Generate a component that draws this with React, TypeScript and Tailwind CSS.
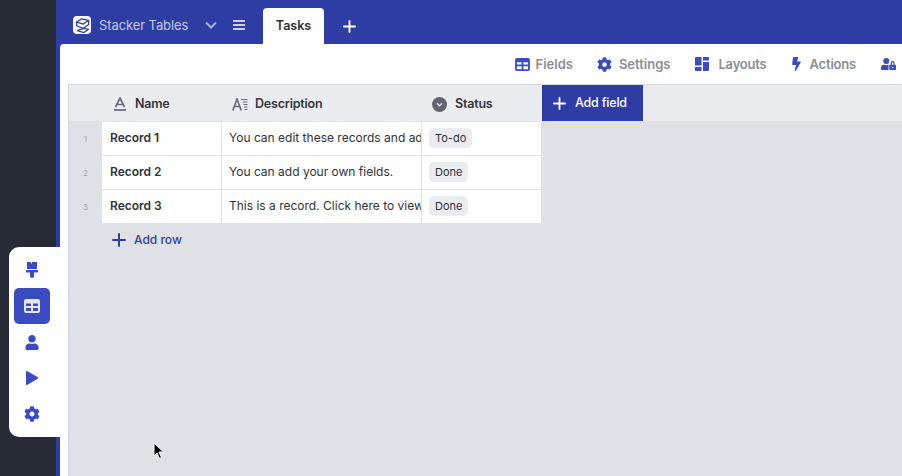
import React from 'react';
import { FaBolt, FaCog, FaUser, FaUserLock } from 'react-icons/fa';

const font = 'font-["Inter","Liberation_Sans",sans-serif]';

const TableIcon = ({ className }: { className?: string }) => (
  <svg viewBox="0 0 16 14" className={className} fill="currentColor">
    <path d="M2 0h12a2 2 0 0 1 2 2v10a2 2 0 0 1-2 2H2a2 2 0 0 1-2-2V2a2 2 0 0 1 2-2Zm0 4.500V7h5V4.500H2Zm7 0V7h5V4.500H9ZM2 9v3h5V9H2Zm7 0v3h5V9H9Z" fillRule="evenodd" />
  </svg>
);

const LayoutIcon = ({ className }: { className?: string }) => (
  <svg viewBox="0 0 14 14" className={className} fill="currentColor">
    <path d="M0 1a1 1 0 0 1 1-1h5.500v8.500H0V1ZM8 0h5a1 1 0 0 1 1 1v2.500H8V0ZM8 5h6v8a1 1 0 0 1-1 1H8V5ZM0 10h6.500v4H1a1 1 0 0 1-1-1v-3Z" />
  </svg>
);

const BrushIcon = ({ className }: { className?: string }) => (
  <svg viewBox="0 0 12 16" className={className} fill="currentColor">
    <path d="M1 0h4v1.500h1V0h5v7H1V0ZM0 8h12v1.500a1 1 0 0 1-1 1H8V14a2 2 0 0 1-4 0v-3.500H1a1 1 0 0 1-1-1V8Z" />
  </svg>
);

const PlayIcon = ({ className }: { className?: string }) => (
  <svg viewBox="0 0 12 14" className={className} fill="currentColor">
    <path d="M0 1a1 1 0 0 1 1.500-.800l10 5.900a1 1 0 0 1 0 1.700l-10 5.900A1 1 0 0 1 0 13V1Z" />
  </svg>
);

const PlusIcon = ({ className }: { className?: string }) => (
  <svg viewBox="0 0 14 14" className={className} fill="none" stroke="currentColor" strokeWidth="2" strokeLinecap="round">
    <path d="M7 1v12M1 7h12" />
  </svg>
);

const NameIcon = () => (
  <svg viewBox="0 0 14 14" className="h-[14px] w-[14px] text-[#6b6f7d]" fill="none" stroke="currentColor" strokeWidth="1.700">
    <path d="M2.500 10 7 1l4.500 9M4.300 7.500h5.400" />
    <path d="M1 13h12" strokeWidth="1.800" />
  </svg>
);

const DescriptionIcon = () => (
  <svg viewBox="0 0 16 13" className="h-[13px] w-[16px] text-[#6b6f7d]" fill="none" stroke="currentColor">
    <path d="M.800 12.500 5 1l4.200 11.500M2.200 8.500h5.600" strokeWidth="1.700" />
    <path d="M9 1.500h6.500M10.500 4h5M11.500 6.500h4M12 9h3.500M12.500 11.500h3" strokeWidth="1" />
  </svg>
);

const StatusIcon = () => (
  <span className="flex h-[15px] w-[15px] items-center justify-center rounded-full bg-[#62656f]">
    <svg viewBox="0 0 8 6" className="h-[5px] w-[7px] text-[#e8e9ed]" fill="none" stroke="currentColor" strokeWidth="1.500">
      <path d="M1 1.500 4 4.500l3-3" />
    </svg>
  </span>
);

const Logo = () => (
  <span className="flex h-[18px] w-[18px] items-center justify-center rounded-[4px] bg-white">
    <svg viewBox="0 0 18 18" className="h-[17px] w-[17px] text-[#2e3da3]" fill="none" stroke="currentColor" strokeWidth="1.300" strokeLinejoin="round">
      <path d="M8 2 15.500 3.500 10 7.500 2.500 5.500 8 2Z" />
      <path d="M2.500 5.500 3 9.500 10 12l5.500 1-5 3.500L3.500 14.500" />
      <path d="M15.500 3.500V8L10 12l-6.500 2.500" />
    </svg>
  </span>
);

const tools = [
  { label: 'Fields', icon: <TableIcon className="h-[13px] w-[15px]" />, cls: 'gap-[6px] mr-6', text: 'tracking-normal' },
  { label: 'Settings', icon: <FaCog className="h-[15px] w-[15px]" />, cls: 'gap-[7px] mr-[25px]', text: 'tracking-normal' },
  { label: 'Layouts', icon: <LayoutIcon className="h-[14px] w-[14px]" />, cls: 'gap-[9px] mr-[23px]', text: 'tracking-[-0.2px]' },
  { label: 'Actions', icon: <FaBolt className="h-[14px] w-[13px]" />, cls: 'gap-[7px] mr-[25px]', text: 'tracking-[-0.2px]' },
];

const records = [
  { n: 1, name: 'Record 1', text: 'You can edit these records and add more.', status: 'To-do' },
  { n: 2, name: 'Record 2', text: 'You can add your own fields.', status: 'Done' },
  { n: 3, name: 'Record 3', text: 'This is a record. Click here to view it.', status: 'Done' },
];

export default function App() {
  return (
    <div className={`relative flex h-[476px] w-[902px] overflow-hidden bg-[#262a35] ${font}`}>
      <div className="w-14 shrink-0" />

      <div className="flex min-w-0 flex-1 flex-col bg-[#2e3da3]">
        {/* Top bar */}
        <div className="flex h-11 shrink-0 items-end pl-[17px]">
          <div className="flex h-[36px] items-center pb-[2px] text-[#c3cbee]">
            <Logo />
            <span className="ml-2 w-[90px] whitespace-nowrap text-[13px] leading-none tracking-[-0.1px]">Stacker Tables</span>
            <svg viewBox="0 0 12 8" className="ml-4 h-2 w-3 text-[#a7b0e3]" fill="none" stroke="currentColor" strokeWidth="2">
              <path d="M1 1.500 6 6.500l5-5" />
            </svg>
            <svg viewBox="0 0 12 10" className="ml-4 h-[10px] w-3 text-white" fill="none" stroke="currentColor" strokeWidth="1.500">
              <path d="M0 1h12M0 5h12M0 9h12" />
            </svg>
          </div>
          <div className="ml-[18px] flex h-9 w-[61px] items-center justify-center rounded-t-[4px] bg-white text-[12.500px] font-semibold text-[#2b2e38]">
            Tasks
          </div>
          <PlusIcon className="ml-[19px] mb-[11px] h-[13px] w-[13px] text-white" />
        </div>

        {/* Panel */}
        <div className="ml-1 flex min-h-0 flex-1 flex-col rounded-tl-[4px] bg-white pl-2">
          <div className="flex h-10 shrink-0 items-center justify-end overflow-hidden pr-[6px] text-[#3b4cc0]">
            {tools.map((t) => (
              <div key={t.label} className={`flex items-center ${t.cls}`}>
                {t.icon}
                <span className={`text-[13px] font-semibold leading-none text-[#8a8d98] ${t.text}`}>{t.label}</span>
              </div>
            ))}
            <FaUserLock className="h-[14px] w-[15px] shrink-0" />
          </div>

          <div className="min-h-0 flex-1 border-l border-t border-[#d3d6de] bg-[#e0e1e6]">
            {/* Header row */}
            <div className="flex h-[37px] border-b border-[#e0e1e6] bg-[#ebecef] text-[12.500px] font-semibold tracking-[-0.2px] text-[#33363f]">
              <div className="w-[33px] shrink-0" />
              <div className="flex w-[120px] items-center gap-[8px] pl-[11px] pt-[2px]"><NameIcon /><span>Name</span></div>
              <div className="flex w-[200px] items-center gap-[7px] pl-[10px] pt-[2px]"><DescriptionIcon /><span>Description</span></div>
              <div className="flex w-[120px] items-center gap-2 pl-[10px] pt-[2px]"><StatusIcon /><span>Status</span></div>
              <div className="flex h-[36px] w-[101px] items-center gap-[9px] bg-[#2e3da3] pl-[11px] pt-[1px] font-medium text-white">
                <PlusIcon className="h-[13px] w-[13px]" />
                <span>Add field</span>
              </div>
            </div>

            {/* Rows */}
            <div className="w-[472px]">
              {records.map((r, i) => (
                <div key={r.n} className={`flex ${i < 2 ? 'h-[34px]' : 'h-[33px]'}`}>
                  <div className="flex w-[33px] shrink-0 items-center justify-center text-[8px] text-[#a3a6af]">{r.n}</div>
                  <div className={`flex h-full min-w-0 flex-1 bg-white text-[12px] text-[#2f323b] ${i < 2 ? 'border-b border-[#e2e3e7]' : ''}`}>
                    <div className="flex w-[120px] shrink-0 items-center border-r border-[#e2e3e7] pb-[1px] pl-2 font-semibold">{r.name}</div>
                    <div className="flex w-[200px] shrink-0 items-center overflow-hidden whitespace-nowrap border-r border-[#e2e3e7] pb-[2px] pl-[7px]">{r.text}</div>
                    <div className="flex items-center pb-[1px] pl-[7px]">
                      <span className="rounded-[5px] bg-[#ebecef] px-[6px] py-[3px] text-[11px] leading-[14px]">{r.status}</span>
                    </div>
                  </div>
                </div>
              ))}
            </div>

            <div className="flex h-[33px] items-center gap-2 pl-[43px] text-[12px] font-medium text-[#2e3da3]">
              <PlusIcon className="h-[14px] w-[14px]" />
              <span>Add row</span>
            </div>
          </div>
        </div>
      </div>

      {/* Floating side menu */}
      <div className="absolute left-[9px] top-[247px] flex h-[190px] w-[59px] flex-col items-center rounded-l-[10px] bg-white pr-[13px] pt-[5px] text-[#3b4cc0]">
        <div className="flex h-[36px] w-[36px] items-center justify-center"><BrushIcon className="h-[16px] w-[12px]" /></div>
        <div className="flex h-[36px] w-[36px] items-center justify-center rounded-[5px] bg-[#3b4cc0] text-[#e3e7f8]"><TableIcon className="h-[14px] w-[16px]" /></div>
        <div className="flex h-[36px] w-[36px] items-center justify-center"><FaUser className="h-[15px] w-[14px]" /></div>
        <div className="flex h-[36px] w-[36px] items-center justify-center"><PlayIcon className="h-[14px] w-[12px]" /></div>
        <div className="flex h-[36px] w-[36px] items-center justify-center"><FaCog className="h-[16px] w-[16px]" /></div>
      </div>

      {/* Mouse pointer */}
      <svg viewBox="0 0 12 18" className="absolute left-[153px] top-[442px] h-[18px] w-[12px]">
        <path d="M1 1v13l3-3 2.500 5.500 2-1L6 10h4.500L1 1Z" fill="#000" stroke="#fff" strokeWidth="1" />
      </svg>
    </div>
  );
}
